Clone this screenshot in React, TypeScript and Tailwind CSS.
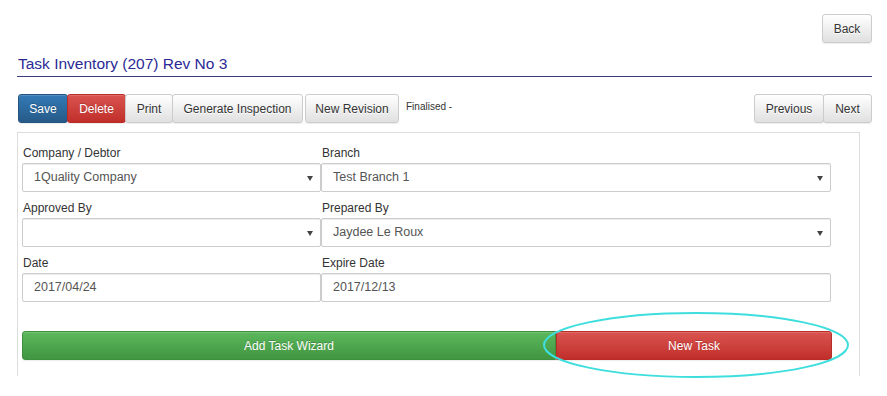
import React from "react";

const btnBase =
  "h-[29px] flex items-center justify-center text-[12px] border rounded-[3px] shadow-[inset_0_1px_0_rgba(255,255,255,0.15),0_1px_1px_rgba(0,0,0,0.075)]";
const btnDefault =
  btnBase +
  " bg-linear-to-b from-[#ffffff] to-[#e0e0e0] border-[#ccc] text-[#333] [text-shadow:0_1px_0_#fff]";
const btnPrimary =
  btnBase + " bg-linear-to-b from-[#337ab7] to-[#265a88] border-[#245580] text-white [text-shadow:0_-1px_0_rgba(0,0,0,0.2)]";
const btnDanger =
  btnBase + " bg-linear-to-b from-[#d9534f] to-[#c12e2a] border-[#b92c28] text-white [text-shadow:0_-1px_0_rgba(0,0,0,0.2)]";
const btnSuccess =
  btnBase + " bg-linear-to-b from-[#5cb85c] to-[#419641] border-[#3e8f3e] text-white [text-shadow:0_-1px_0_rgba(0,0,0,0.2)]";

function Field({ label, children }: { label: string; children: React.ReactNode }) {
  return (
    <div className="flex flex-col">
      <label className="pl-[1px] text-[12px] leading-[16px] mb-[2px] text-[#333]">{label}</label>
      {children}
    </div>
  );
}

function Select({ value }: { value?: string }) {
  return (
    <div className="relative h-[29px] flex items-center border border-[#ccc] rounded-[2px] bg-white shadow-[inset_0_1px_1px_rgba(0,0,0,0.075)] pl-[11px] text-[12.5px] text-[#555]">
      <span>{value}</span>
      <svg className="absolute right-[7px] top-[12px]" width="6" height="5" viewBox="0 0 6 5">
        <path d="M0 0 L6 0 L3 5 Z" fill="#444" />
      </svg>
    </div>
  );
}

function Input({ value }: { value: string }) {
  return (
    <div className="h-[29px] flex items-center border border-[#ccc] rounded-[2px] bg-white shadow-[inset_0_1px_1px_rgba(0,0,0,0.075)] pl-[11px] text-[12.5px] text-[#555]">
      {value}
    </div>
  );
}

export default function App() {
  return (
    <div className="min-h-screen bg-white font-['Liberation_Sans',Arial,sans-serif] text-[#333] pl-[17px] pr-[15px] pt-[14px]">
      {/* Back */}
      <div className="flex justify-end">
        <button className={btnDefault + " w-[50px]"}>Back</button>
      </div>

      {/* Title */}
      <h1 className="mt-[12px] pl-[1px] pb-[3px] border-b border-[#3b3b80] text-[15.5px] leading-[18px] text-[#2a2a96]">
        Task Inventory (207) Rev No 3
      </h1>

      {/* Toolbar */}
      <div className="mt-[17px] flex items-start">
        <button className={btnPrimary + " ml-[1px] w-[50px]"}>Save</button>
        <button className={btnDanger + " w-[59px] -ml-[1px]"}>Delete</button>
        <button className={btnDefault + " w-[48px] -ml-[1px]"}>Print</button>
        <button className={btnDefault + " w-[131px] -ml-[1px]"}>Generate Inspection</button>
        <button className={btnDefault + " w-[94px] ml-[2px]"}>New Revision</button>
        <span className="ml-[7px] mt-[7px] text-[10px] leading-[12px] text-[#333]">Finalised -</span>
        <div className="ml-auto flex">
          <button className={btnDefault + " w-[70px]"}>Previous</button>
          <button className={btnDefault + " w-[49px] -ml-[1px]"}>Next</button>
        </div>
      </div>

      {/* Panel */}
      <div className="mt-[9px] w-[843px] h-[244px] border-t border-x border-[#ddd] pt-[12px] pl-[4px]">
        <div className="grid grid-cols-[299px_510px] gap-y-[8px]">
          <Field label="Company / Debtor">
            <Select value="1Quality Company" />
          </Field>
          <Field label="Branch">
            <Select value="Test Branch 1" />
          </Field>
          <Field label="Approved By">
            <Select />
          </Field>
          <Field label="Prepared By">
            <Select value="Jaydee Le Roux" />
          </Field>
          <Field label="Date">
            <Input value="2017/04/24" />
          </Field>
          <Field label="Expire Date">
            <Input value="2017/12/13" />
          </Field>
        </div>

        <div className="mt-[29px] flex">
          <button className={btnSuccess + " w-[534px] rounded-r-none"}>Add Task Wizard</button>
          <div className="relative">
            <button className={btnDanger + " w-[276px] rounded-l-none"}>New Task</button>
            {/* highlight annotation */}
            <svg
              className="absolute -left-[13px] -top-[19px] pointer-events-none"
              width="308"
              height="66"
              viewBox="0 0 308 66"
            >
              <ellipse cx="153" cy="33" rx="152" ry="32" fill="none" stroke="#3fdede" strokeWidth="2" />
            </svg>
          </div>
        </div>
      </div>
    </div>
  );
}
